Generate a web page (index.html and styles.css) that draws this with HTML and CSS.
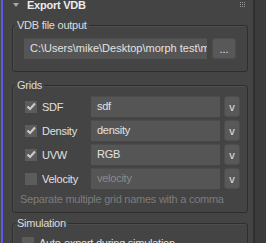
FILE: index.html
```html
<!DOCTYPE html>
<html lang="en">
<head>
   <meta charset="UTF-8">
   <title>Export VDB</title>
   <link rel="stylesheet" href="styles.css">
</head>
<body>
   <div class="edge"></div>
   <div class="panel">
       <div class="rollout-head">
           <span class="arrow"></span>
           <span class="title">Export VDB</span>
           <svg class="grip" width="5" height="5" viewBox="0 0 5 5">
               <g fill="#9a9a9a">
                   <rect x="0" y="0" width="1" height="1"/><rect x="2" y="0" width="1" height="1"/><rect x="4" y="0" width="1" height="1"/>
                   <rect x="0" y="2" width="1" height="1"/><rect x="2" y="2" width="1" height="1"/><rect x="4" y="2" width="1" height="1"/>
                   <rect x="0" y="4" width="1" height="1"/><rect x="2" y="4" width="1" height="1"/><rect x="4" y="4" width="1" height="1"/>
               </g>
           </svg>
       </div>

       <fieldset class="group output">
           <legend>VDB file output</legend>
           <div class="file-row">
               <div class="field path">C:\Users\mike\Desktop\morph test\morph.vdb</div>
               <button class="btn browse">...</button>
           </div>
       </fieldset>

       <fieldset class="group grids">
           <legend>Grids</legend>
           <div class="grid-rows">
               <label class="check"><span class="box"><svg width="12" height="12" viewBox="0 0 12 12"><path d="M2.5 5.5 L5 8 L10 2.5" fill="none" stroke="#c9c9c9" stroke-width="2.2"/></svg></span>SDF</label>
               <div class="field">sdf</div>
               <button class="btn pick">v</button>

               <label class="check"><span class="box"><svg width="12" height="12" viewBox="0 0 12 12"><path d="M2.5 5.5 L5 8 L10 2.5" fill="none" stroke="#c9c9c9" stroke-width="2.2"/></svg></span>Density</label>
               <div class="field">density</div>
               <button class="btn pick">v</button>

               <label class="check"><span class="box"><svg width="12" height="12" viewBox="0 0 12 12"><path d="M2.5 5.5 L5 8 L10 2.5" fill="none" stroke="#c9c9c9" stroke-width="2.2"/></svg></span>UVW</label>
               <div class="field">RGB</div>
               <button class="btn pick">v</button>

               <label class="check"><span class="box"></span>Velocity</label>
               <div class="field off">velocity</div>
               <button class="btn pick">v</button>
           </div>
           <p class="hint">Separate multiple grid names with a comma</p>
       </fieldset>

       <fieldset class="group sim">
           <legend>Simulation</legend>
           <label class="check"><span class="box"></span>Auto-export during simulation</label>
       </fieldset>
   </div>
   <div class="scroll"></div>
</body>
</html>
```

FILE: styles.css
```css
body {
    margin: 0;
    height: 243px;
    overflow: hidden;
    display: flex;
    background-color: #444444;
    font-family: "Liberation Sans", Arial, sans-serif;
    font-size: 11px;
    letter-spacing: -0.25px;
    color: #dcdcdc;
}
.edge {
    width: 2px;
    border-left: 1px solid #4a4a4a;
    background-color: #5a5af0;
}
.panel {
    flex: 1;
    min-width: 0;
    background-color: #444444;
}
.scroll {
    width: 11px;
    border-left: 2px solid #2f2f2f;
    background-color: #3b3b3b;
}
.rollout-head {
    height: 14px;
    display: flex;
    align-items: center;
    position: relative;
}
.arrow {
    width: 0;
    height: 0;
    margin-left: 10px;
    border-left: 3px solid transparent;
    border-right: 3px solid transparent;
    border-top: 4px solid #a8a8a8;
    margin-top: -5px;
}
.title {
    margin-left: 8px;
    margin-top: -4px;
    font-size: 11px;
    font-weight: bold;
    color: #ececec;
}
.grip {
    position: absolute;
    right: 8px;
    top: 2px;
}
.group {
    min-inline-size: 0;
    margin: 4px 5px 0 9px;
    padding: 6px 11px 12px 11px;
    border: 1px solid #2e2e2e;
    border-radius: 3px;
    box-shadow: inset 1px 1px 0 #4d4d4d;
}
.group legend {
    padding: 0 2px;
    line-height: 14px;
    color: #dcdcdc;
}
.output legend {
    margin-left: -9px;
}
.grids {
    margin-top: 6px;
    padding: 4px 11px 6px 7px;
}
.grids legend {
    margin-left: -5px;
}
.sim {
    margin-top: 3px;
    padding: 7px 11px 6px 9px;
}
.sim legend {
    margin-left: -7px;
}
.file-row {
    display: flex;
    gap: 5px;
}
.field {
    flex: 1;
    min-width: 0;
    height: 21px;
    line-height: 21px;
    padding-left: 6px;
    background-color: #555555;
    color: #e2e2e2;
    white-space: nowrap;
    overflow: hidden;
    box-shadow: inset 0 1px 0 #4c4c4c;
}
.field.path {
    letter-spacing: 0;
}
.field.off {
    color: #8a8a8a;
}
.btn {
    height: 21px;
    padding: 0;
    border: 1px solid #4d4d4d;
    border-radius: 3px;
    background-color: #585858;
    color: #e6e6e6;
    font-family: inherit;
    font-size: 11px;
}
.browse {
    width: 24px;
}
.grid-rows {
    display: grid;
    grid-template-columns: 62px 129px 16px;
    column-gap: 4px;
    row-gap: 3px;
    padding-left: 5px;
}
.check {
    display: flex;
    align-items: center;
    gap: 5px;
    color: #e0e0e0;
}
.box {
    width: 12px;
    height: 12px;
    background-color: #5c5c5c;
}
.box svg {
    display: block;
}
.hint {
    margin: 3px 0 0 0;
    line-height: 14px;
    color: #7c7c7c;
}
```
